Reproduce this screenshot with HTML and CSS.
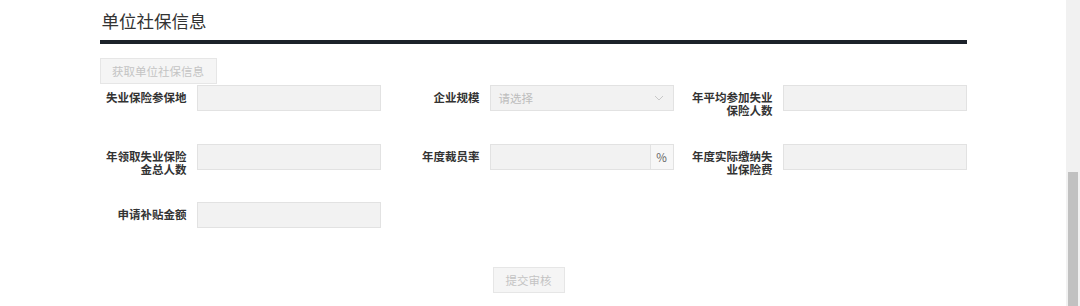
FILE: index.html
```html
<!DOCTYPE html>
<html lang="zh-CN">
<head>
    <meta charset="UTF-8">
    <meta name="viewport" content="width=device-width, initial-scale=1.0">
    <title>单位社保信息</title>
    <link rel="stylesheet" href="styles.css">
</head>
<body>
    <div class="page">
        <div class="main">
            <div class="section">
                <h2 class="section-title">单位社保信息</h2>
                <button class="btn btn-fetch" disabled>获取单位社保信息</button>

                <div class="form-grid">
                    <div class="field">
                        <label class="field-label">失业保险参保地</label>
                        <input class="field-input" type="text" disabled>
                    </div>
                    <div class="field">
                        <label class="field-label">企业规模</label>
                        <div class="field-select">
                            <span class="placeholder">请选择</span>
                            <svg class="chevron" width="10" height="6" viewBox="0 0 10 6">
                                <path d="M1 1l4 4 4-4" fill="none" stroke="#c8c8c8" stroke-width="1"/>
                            </svg>
                        </div>
                    </div>
                    <div class="field">
                        <label class="field-label">年平均参加失业保险人数</label>
                        <input class="field-input" type="text" disabled>
                    </div>

                    <div class="field">
                        <label class="field-label">年领取失业保险金总人数</label>
                        <input class="field-input" type="text" disabled>
                    </div>
                    <div class="field">
                        <label class="field-label">年度裁员率</label>
                        <div class="input-group">
                            <input class="field-input" type="text" disabled>
                            <span class="addon">%</span>
                        </div>
                    </div>
                    <div class="field">
                        <label class="field-label">年度实际缴纳失业保险费</label>
                        <input class="field-input" type="text" disabled>
                    </div>

                    <div class="field">
                        <label class="field-label">申请补贴金额</label>
                        <input class="field-input" type="text" disabled>
                    </div>
                </div>

                <div class="actions">
                    <button class="btn btn-submit" disabled>提交审核</button>
                </div>
            </div>
        </div>
        <div class="scrollbar">
            <div class="scroll-thumb"></div>
        </div>
    </div>
</body>
</html>
```

FILE: styles.css
```css
* {
    box-sizing: border-box;
}
html, body {
    margin: 0;
    height: 100%;
    overflow: hidden;
}
body {
    font-family: "Noto Sans CJK SC", "Noto Sans", sans-serif;
    font-size: 11.5px;
    color: #333;
    background: #fff;
}
.page {
    display: flex;
    height: 306px;
}
.main {
    flex: 1;
}
.section {
    width: 867px;
    margin: 0 auto;
}
.section-title {
    margin: 0;
    padding: 9px 0 7px 2px;
    font-size: 17.5px;
    line-height: 24px;
    font-weight: normal;
    color: #333;
    border-bottom: 4px solid #1c222a;
}
.btn {
    height: 26px;
    padding: 0;
    font-family: inherit;
    font-size: 11.5px;
    white-space: nowrap;
    text-align: center;
    color: #c4c4c4;
    background: #f5f5f5;
    border: 1px solid #e6e6e6;
    border-radius: 0;
}
.btn-fetch {
    display: block;
    width: 117px;
    margin: 14px 0 1px;
}
.form-grid {
    display: grid;
    grid-template-columns: repeat(3, 281px);
    grid-auto-rows: 26px;
    column-gap: 12px;
    row-gap: 32.5px;
}
.field {
    display: flex;
    gap: 10px;
}
.field-label {
    width: 87px;
    flex-shrink: 0;
    padding-top: 6px;
    text-align: right;
    font-weight: bold;
    line-height: 13px;
    color: #333;
}
.field-input {
    width: 184px;
    height: 26px;
    margin: 0;
    background: #f2f2f2;
    border: 1px solid #e2e2e2;
    border-radius: 0;
}
.field-select {
    display: flex;
    align-items: center;
    justify-content: space-between;
    width: 184px;
    height: 26px;
    padding: 0 9px 0 8px;
    background: #f2f2f2;
    border: 1px solid #e2e2e2;
}
.placeholder {
    color: #bdbdbd;
}
.input-group {
    display: flex;
    width: 184px;
}
.input-group .field-input {
    width: 161px;
}
.addon {
    display: flex;
    align-items: center;
    justify-content: center;
    width: 23px;
    height: 26px;
    color: #666;
    background: #f7f7f7;
    border: 1px solid #e2e2e2;
    border-left: none;
}
.actions {
    display: flex;
    justify-content: center;
    padding-right: 9px;
    margin-top: 39px;
}
.btn-submit {
    width: 72px;
}
.scrollbar {
    width: 14px;
    background: #f1f1f1;
    padding: 172px 2px 0;
}
.scroll-thumb {
    height: 134px;
    background: #c1c1c1;
}
```
